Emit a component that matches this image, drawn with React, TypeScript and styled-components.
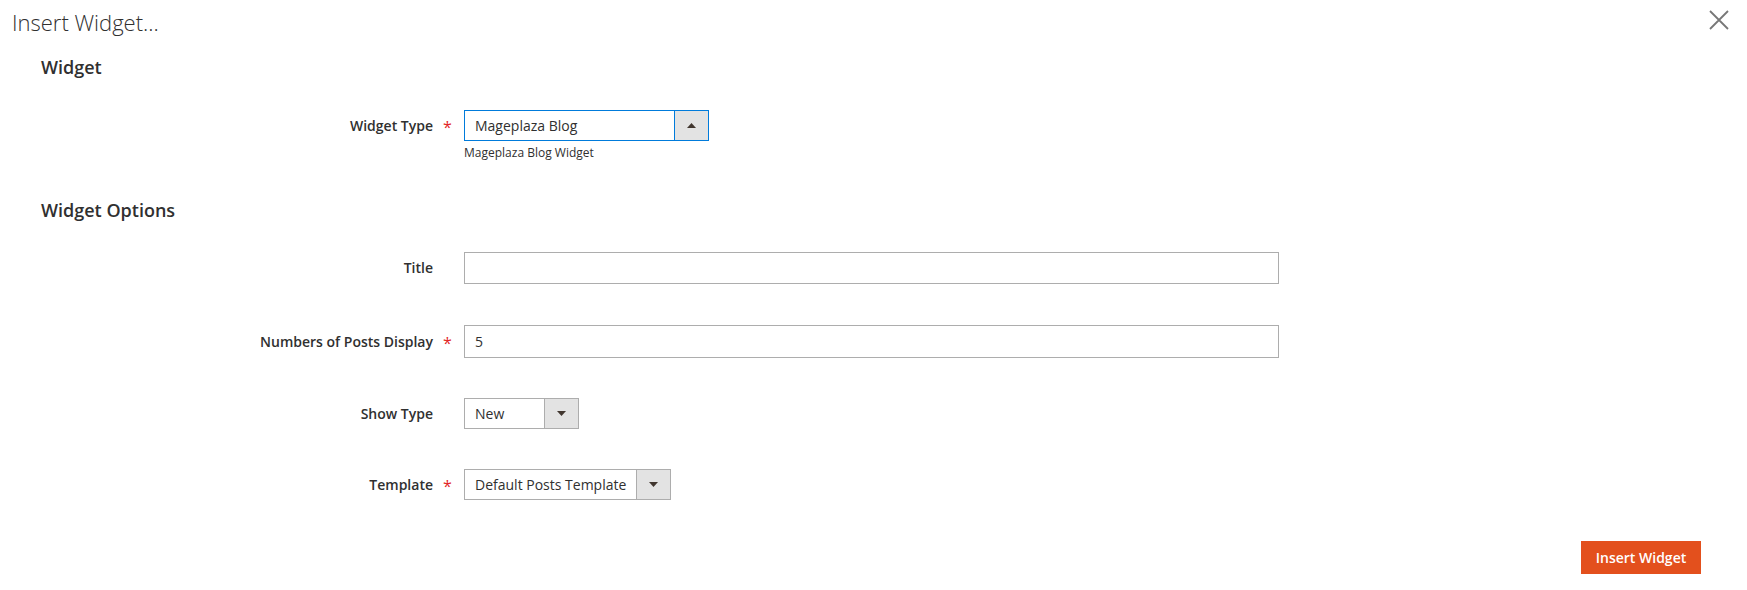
import React from "react";
import styled, { createGlobalStyle } from "styled-components";

const GlobalStyle = createGlobalStyle`
  html, body { margin: 0; padding: 0; background: #fff; }
  body { font-family: "Open Sans", "Noto Sans", sans-serif; color: #303030; }
  * { box-sizing: border-box; }
`;

const Modal = styled.div`
  width: 1747px;
  height: 590px;
  background: #fff;
  display: flex;
  flex-direction: column;
`;

const Header = styled.header`
  display: flex;
  justify-content: space-between;
  align-items: flex-start;
  padding: 9px 18px 0 12px;
  height: 35px;
`;

const ModalTitle = styled.h1`
  margin: 0;
  font-size: 22px;
  line-height: 26px;
  font-weight: 300;
  color: #303030;
`;

const CloseButton = styled.button`
  border: 0;
  background: transparent;
  padding: 0;
  width: 20px;
  height: 20px;
  margin-top: 1px;
  color: #777;
  cursor: pointer;
  display: flex;
`;

const Content = styled.div`
  padding: 20px 0 0 41px;
  flex: 1;
  display: flex;
  flex-direction: column;
`;

const Legend = styled.h2<{ $top?: number; $gap: number }>`
  margin: ${(p) => p.$top ?? 0}px 0 ${(p) => p.$gap}px 0;
  font-size: 18px;
  line-height: 24px;
  font-weight: 600;
  color: #303030;
`;

const Row = styled.div<{ $mt?: number }>`
  display: grid;
  grid-template-columns: 392px 31px auto;
  align-items: start;
  margin-top: ${(p) => p.$mt ?? 0}px;
`;

const Label = styled.label<{ $h: number }>`
  font-size: 14px;
  font-weight: 600;
  line-height: ${(p) => p.$h}px;
  text-align: right;
  color: #303030;
`;

const Required = styled.span<{ $h: number }>`
  color: #e22626;
  font-size: 16px;
  line-height: ${(p) => p.$h}px;
  padding-left: 10px;
  padding-top: 2px;
`;

const Control = styled.div`
  display: flex;
  flex-direction: column;
  align-items: flex-start;
`;

const TextInput = styled.div<{ $w: number; $h: number }>`
  width: ${(p) => p.$w}px;
  height: ${(p) => p.$h}px;
  border: 1px solid #adadad;
  background: #fff;
  font-size: 14px;
  line-height: ${(p) => p.$h - 2}px;
  padding: 0 10px;
  color: #303030;
`;

const Select = styled.div<{ $w: number; $h: number; $focus?: boolean }>`
  width: ${(p) => p.$w}px;
  height: ${(p) => p.$h}px;
  border: 1px solid ${(p) => (p.$focus ? "#007bdb" : "#adadad")};
  background: #fff;
  display: flex;
  font-size: 14px;
  color: #303030;
`;

const SelectValue = styled.span`
  flex: 1;
  padding-left: 10px;
  display: flex;
  align-items: center;
  white-space: nowrap;
`;

const SelectArrow = styled.span<{ $focus?: boolean }>`
  width: 34px;
  background: #e3e3e3;
  border-left: 1px solid ${(p) => (p.$focus ? "#007bdb" : "#adadad")};
  display: flex;
  align-items: center;
  justify-content: center;
  color: #41362f;
`;

const Note = styled.div`
  font-size: 12px;
  line-height: 16px;
  margin-top: 4px;
  color: #303030;
`;

const Footer = styled.div`
  display: flex;
  justify-content: flex-end;
  padding: 39px 46px 0 0;
`;

const PrimaryButton = styled.button`
  width: 120px;
  height: 33px;
  border: 1px solid #e3501d;
  background: #e3501d;
  color: #fff;
  font-family: "Open Sans", sans-serif;
  font-size: 14px;
  font-weight: 600;
  padding: 0;
  cursor: pointer;
`;

const Arrow = ({ up }: { up?: boolean }) => (
  <svg width="9" height="5" viewBox="0 0 9 5">
    {up ? <polygon points="0,5 9,5 4.5,0" fill="currentColor" /> : <polygon points="0,0 9,0 4.5,5" fill="currentColor" />}
  </svg>
);

export default function App() {
  return (
    <>
      <GlobalStyle />
      <Modal>
        <Header>
          <ModalTitle>Insert Widget...</ModalTitle>
          <CloseButton aria-label="Close">
            <svg width="20" height="20" viewBox="0 0 20 20">
              <path d="M1 1 L19 19 M19 1 L1 19" stroke="currentColor" strokeWidth="1.8" fill="none" />
            </svg>
          </CloseButton>
        </Header>
        <Content>
          <Legend $gap={31}>Widget</Legend>
          <Row>
            <Label $h={31}>Widget Type</Label>
            <Required $h={31}>*</Required>
            <Control>
              <Select $w={245} $h={31} $focus>
                <SelectValue>Mageplaza Blog</SelectValue>
                <SelectArrow $focus>
                  <Arrow up />
                </SelectArrow>
              </Select>
              <Note>Mageplaza Blog Widget</Note>
            </Control>
          </Row>

          <Legend $top={37} $gap={30}>Widget Options</Legend>
          <Row>
            <Label $h={32}>Title</Label>
            <span />
            <Control>
              <TextInput $w={815} $h={32} />
            </Control>
          </Row>
          <Row $mt={41}>
            <Label $h={33}>Numbers of Posts Display</Label>
            <Required $h={33}>*</Required>
            <Control>
              <TextInput $w={815} $h={33}>5</TextInput>
            </Control>
          </Row>
          <Row $mt={38}>
            <Label $h={31}>Show Type</Label>
            <span />
            <Control>
              <Select $w={115} $h={31}>
                <SelectValue>New</SelectValue>
                <SelectArrow>
                  <Arrow />
                </SelectArrow>
              </Select>
            </Control>
          </Row>
          <Row $mt={40}>
            <Label $h={31}>Template</Label>
            <Required $h={31}>*</Required>
            <Control>
              <Select $w={207} $h={31}>
                <SelectValue>Default Posts Template</SelectValue>
                <SelectArrow>
                  <Arrow />
                </SelectArrow>
              </Select>
            </Control>
          </Row>

          <Footer>
            <PrimaryButton>Insert Widget</PrimaryButton>
          </Footer>
        </Content>
      </Modal>
    </>
  );
}
